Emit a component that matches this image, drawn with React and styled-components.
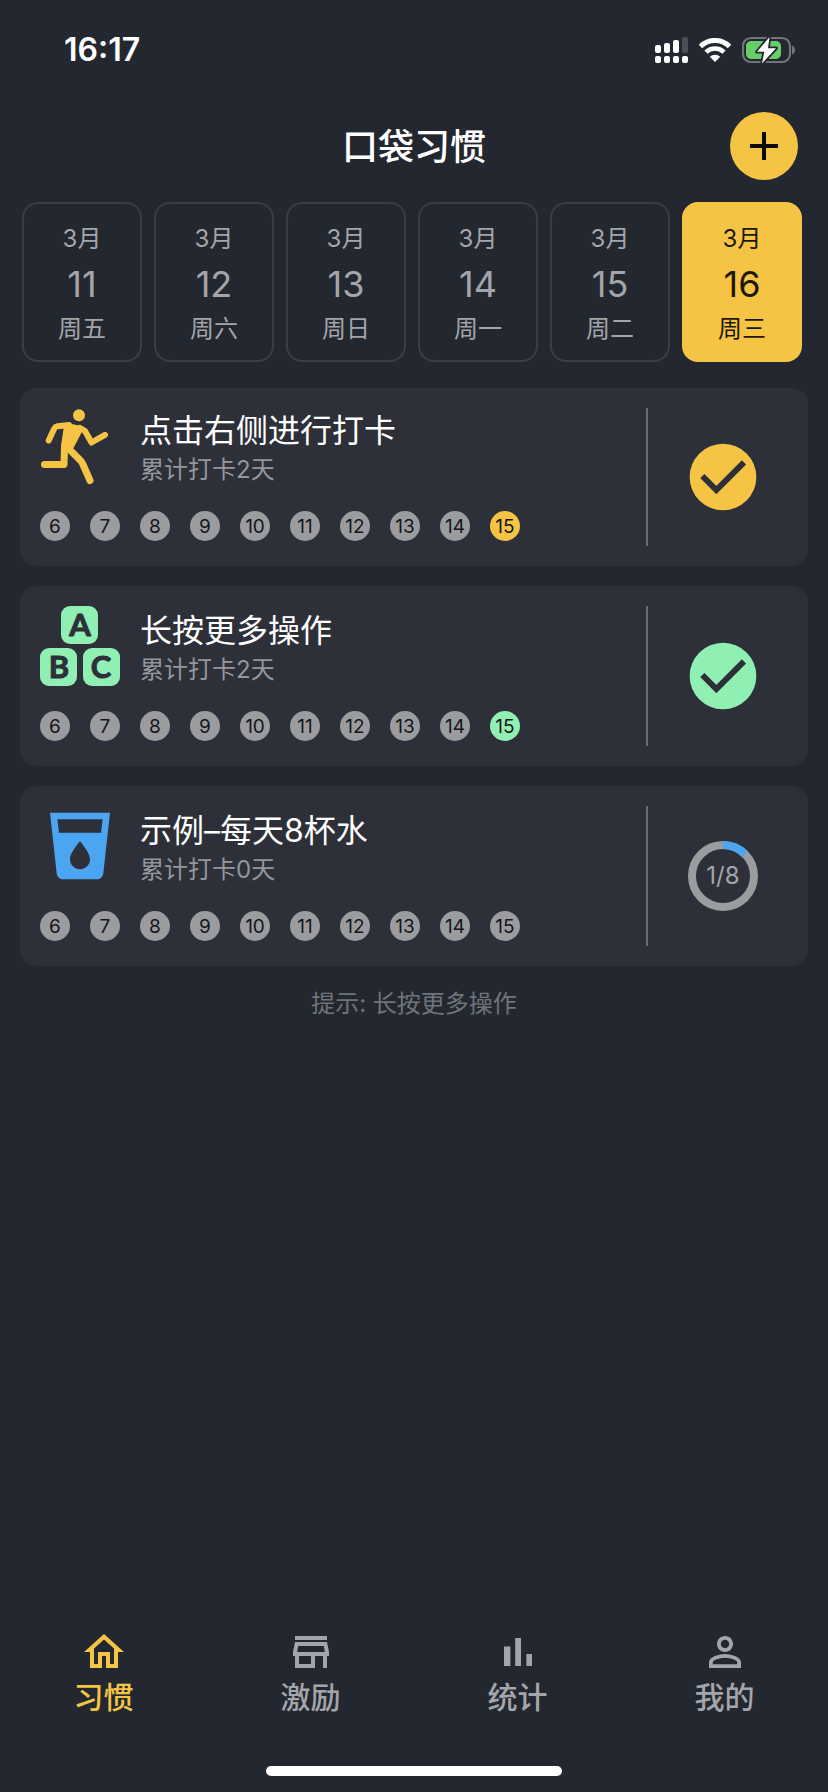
import React from "react";
import styled, { createGlobalStyle, ThemeProvider } from "styled-components";

const theme = {
  bg: "#232830",
  card: "#2d3038",
  line: "#3a3e46",
  divider: "#686b73",
  text: "#ffffff",
  muted: "#a3a5ab",
  sub: "#94969e",
  hint: "#6f737a",
  dot: "#9b9c9f",
  yellow: "#f6c445",
  green: "#90f0b4",
  blue: "#4ba5f0",
};

const GlobalStyle = createGlobalStyle`
  *, *::before, *::after { box-sizing: border-box; }
  body {
    margin: 0;
    background: ${theme.bg};
    font-family: Inter, "Noto Sans CJK SC", sans-serif;
  }
  button {
    margin: 0;
    padding: 0;
    border: 0;
    background: none;
    color: inherit;
    font: inherit;
    cursor: pointer;
  }
  svg { display: block; }
`;

const Page = styled.div`
  display: flex;
  flex-direction: column;
  min-height: 100vh;
  background: ${(p) => p.theme.bg};
  color: ${(p) => p.theme.text};
`;

const StatusBar = styled.div`
  display: flex;
  align-items: center;
  justify-content: space-between;
  height: 100px;
  padding: 0 32px 0 64px;
`;

const Clock = styled.time`
  font-size: 32px;
  font-weight: 600;
  line-height: 40px;
`;

const StatusIcons = styled.div`
  display: flex;
  align-items: center;
  gap: 11px;
`;

const Header = styled.header`
  display: grid;
  grid-template-columns: 1fr auto 1fr;
  align-items: center;
  height: 92px;
  padding: 0 30px;
`;

const Title = styled.h1`
  grid-column: 2;
  margin: 0;
  padding-top: 2px;
  font-size: 36px;
  font-weight: 500;
  line-height: 48px;
`;

const AddButton = styled.button`
  display: grid;
  place-items: center;
  justify-self: end;
  width: 68px;
  height: 68px;
  border-radius: 50%;
  background: ${(p) => p.theme.yellow};
`;

const DateStrip = styled.div`
  display: grid;
  grid-template-columns: repeat(6, 1fr);
  gap: 12px;
  padding: 10px 26px 26px 22px;
`;

const DateCell = styled.button`
  display: flex;
  flex-direction: column;
  align-items: center;
  height: 160px;
  padding-top: 18px;
  border: 2px solid ${(p) => (p.$active ? p.theme.yellow : p.theme.line)};
  border-radius: 16px;
  background: ${(p) => (p.$active ? p.theme.yellow : "transparent")};
  color: ${(p) => (p.$active ? "#1c1708" : p.theme.muted)};
`;

const DateLabel = styled.span`
  font-size: 24px;
  line-height: 34px;
`;

const DateNumber = styled.span`
  font-size: 36px;
  line-height: 56px;
`;

const HabitList = styled.ul`
  display: flex;
  flex-direction: column;
  gap: 20px;
  margin: 0;
  padding: 0 20px;
  list-style: none;
`;

const HabitCard = styled.li`
  display: flex;
  padding: 20px 10px 20px 20px;
  border-radius: 16px;
  background: ${(p) => p.theme.card};
`;

const HabitMain = styled.div`
  flex: 1;
`;

const HabitHead = styled.div`
  display: flex;
  align-items: flex-end;
  gap: 20px;
`;

const HabitIcon = styled.div`
  display: grid;
  place-items: center;
  width: 80px;
`;

const HabitName = styled.h2`
  margin: 0;
  font-size: 32px;
  font-weight: 400;
  line-height: 46px;
`;

const HabitTotal = styled.p`
  margin: 0;
  color: ${(p) => p.theme.sub};
  font-size: 24px;
  line-height: 32px;
`;

const DotRow = styled.ol`
  display: flex;
  gap: 20px;
  margin: 25px 0 5px;
  padding: 0;
  list-style: none;
`;

const Dot = styled.li`
  width: 30px;
  height: 30px;
  border-radius: 50%;
  background: ${(p) => p.$color || p.theme.dot};
  color: #14161a;
  font-size: 19px;
  line-height: 32px;
  text-align: center;
`;

const HabitSide = styled.div`
  display: grid;
  place-items: center;
  width: 152px;
  border-left: 2px solid ${(p) => p.theme.divider};
`;

const CheckButton = styled.button`
  display: grid;
  place-items: center;
`;

const Hint = styled.p`
  flex: 1;
  margin: 20px 0 0;
  color: ${(p) => p.theme.hint};
  font-size: 24px;
  line-height: 36px;
  text-align: center;
`;

const TabBar = styled.nav`
  display: grid;
  grid-template-columns: repeat(4, 1fr);
`;

const Tab = styled.a`
  display: flex;
  flex-direction: column;
  align-items: center;
  color: ${(p) => (p.$active ? p.theme.yellow : p.theme.muted)};
  font-size: 30px;
  font-weight: 500;
  line-height: 42px;
  text-decoration: none;
`;

const HomeIndicator = styled.div`
  align-self: center;
  width: 296px;
  height: 10px;
  margin: 48px 0 16px;
  border-radius: 5px;
  background: #ffffff;
`;

const SignalIcon = () => (
  <svg width="33" height="26" viewBox="0 0 33 26" fill="#fff" aria-hidden="true">
    <rect x="0" y="8" width="6" height="8" rx="2" />
    <rect x="9" y="6" width="6" height="10" rx="2" />
    <rect x="18" y="3" width="6" height="13" rx="2" />
    <rect x="27" y="0" width="6" height="16" rx="2" fill="#4b4f56" />
    <rect x="0" y="19" width="6" height="7" rx="2" />
    <rect x="9" y="19" width="6" height="7" rx="2" />
    <rect x="18" y="19" width="6" height="7" rx="2" />
    <rect x="27" y="19" width="6" height="7" rx="2" />
  </svg>
);

const WifiIcon = () => (
  <svg width="32" height="24" viewBox="0 0 32 24" fill="none" stroke="#fff" aria-hidden="true">
    <path d="M1.5 8.4a20.6 20.6 0 0 1 29 0" strokeWidth="5" />
    <path d="M7 14.2a12.8 12.8 0 0 1 18 0" strokeWidth="4.6" />
    <path d="M16 24l-5.200-5.200a7.400 7.400 0 0 1 10.400 0z" fill="#fff" stroke="none" />
  </svg>
);

const BatteryIcon = () => (
  <svg width="54" height="28" viewBox="0 0 54 28" aria-hidden="true">
    <rect x="1" y="2" width="47" height="24" rx="8" fill="none" stroke="#71757b" strokeWidth="2.200" />
    <path d="M50 9.500c4 1.500 4 7.500 0 9z" fill="#71757b" />
    <rect x="4" y="5" width="35" height="18" rx="5" fill="#67ce67" />
    <path
      d="M27.500 1L15 15.800h7.300L20 27.500 34 12.200h-8z"
      fill="#fff"
      stroke={theme.bg}
      strokeWidth="3.600"
      strokeLinejoin="round"
      paintOrder="stroke"
    />
  </svg>
);

const PlusIcon = () => (
  <svg width="28" height="28" viewBox="0 0 28 28" stroke="#0c0a04" strokeWidth="4" aria-hidden="true">
    <path d="M14 0v28M0 14h28" />
  </svg>
);

const RunnerIcon = () => (
  <svg
    width="78"
    height="78"
    viewBox="11 8 78 78"
    fill="none"
    stroke={theme.yellow}
    strokeWidth="6"
    strokeLinecap="round"
    strokeLinejoin="round"
    aria-hidden="true"
  >
    <circle cx="49" cy="15.300" r="6" fill={theme.yellow} stroke="none" />
    <path d="M18.700 40.500L24 29q1-2.200 3.500-2.800L39 25" />
    <path d="M37 26l13 3-10.500 20-5.500-3z" fill={theme.yellow} />
    <path d="M50 28l5 3 6.500 11.500L75 34.800" />
    <path d="M34.500 47l-.5 17.500H14.500" strokeWidth="7" />
    <path d="M38 48l12 12q2 2 3 4.500L60 80.500" strokeWidth="7" />
  </svg>
);

const BlockLetter = styled.text`
  fill: ${(p) => p.theme.card};
  stroke: ${(p) => p.theme.card};
  stroke-width: 1px;
  stroke-linejoin: round;
  font-family: Lato, sans-serif;
  font-size: 31px;
  font-weight: 700;
  text-anchor: middle;
`;

const BlocksIcon = () => (
  <svg width="80" height="80" viewBox="0 0 80 80" fill={theme.green} aria-hidden="true">
    <rect x="21" y="0" width="37" height="38" rx="9" />
    <rect x="0" y="42" width="37" height="38" rx="9" />
    <rect x="43" y="42" width="37" height="38" rx="9" />
    <BlockLetter x="40" y="30">A</BlockLetter>
    <BlockLetter x="19" y="72">B</BlockLetter>
    <BlockLetter x="61" y="72">C</BlockLetter>
  </svg>
);

const GlassIcon = () => (
  <svg width="80" height="80" viewBox="0 0 24 24" fill={theme.blue} aria-hidden="true">
    <path d="M3 2l2.010 18.230C5.130 21.230 5.970 22 7 22h10c1.030 0 1.870-.77 1.990-1.770L21 2H3zm9 17c-1.660 0-3-1.340-3-3 0-2 3-5.400 3-5.400s3 3.400 3 5.400c0 1.660-1.340 3-3 3zm6.330-11H5.670l-.44-4h13.550l-.45 4z" />
  </svg>
);

const CheckIcon = ({ color }) => (
  <svg width="80" height="80" viewBox="0 0 24 24" aria-hidden="true">
    <circle cx="12" cy="12" r="10" fill={color} />
    <path d="M5.800 11.700l4.200 4.200 8.300-8.300" fill="none" stroke={theme.card} strokeWidth="1.800" />
  </svg>
);

const RingLabel = styled.text`
  fill: ${(p) => p.theme.muted};
  font-size: 24px;
  text-anchor: middle;
`;

const ProgressRing = ({ done, goal, color }) => {
  const radius = 31;
  const length = 2 * Math.PI * radius;
  return (
    <svg width="70" height="70" viewBox="0 0 70 70" fill="none" strokeWidth="8">
      <circle cx="35" cy="35" r={radius} stroke={theme.dot} />
      <circle
        cx="35"
        cy="35"
        r={radius}
        stroke={color}
        strokeDasharray={`${(length * done) / goal} ${length}`}
        transform="rotate(-90 35 35)"
      />
      <RingLabel x="35" y="43" strokeWidth="0">{`${done}/${goal}`}</RingLabel>
    </svg>
  );
};

const TAB_PATHS = {
  home: "M12 5.690l5 4.500V18h-2v-6H9v6H7v-7.810l5-4.500M12 3L2 12h3v8h6v-6h2v6h6v-8h3L12 3z",
  store:
    "M18.360 9l.6 3H5.040l.6-3h12.720M20 4H4v2h16V4zm0 3H4l-1 5v2h1v6h10v-6h4v6h2v-6h1v-2l-1-5zM6 18v-4h6v4H6z",
  chart: "M5 9.200h3.200V19H5V9.200zM10.600 5h2.900v14h-2.900V5zm5.600 8H19v6h-2.800v-6z",
  person:
    "M12 5.900c1.160 0 2.100.94 2.100 2.100s-.94 2.100-2.100 2.100S9.900 9.160 9.900 8s.94-2.100 2.100-2.100m0 9c2.970 0 6.100 1.460 6.100 2.100v1.100H5.900V17c0-.64 3.130-2.100 6.100-2.100M12 4C9.790 4 8 5.790 8 8s1.790 4 4 4 4-1.790 4-4-1.790-4-4-4zm0 9c-2.670 0-8 1.340-8 4v3h16v-3c0-2.660-5.330-4-8-4z",
};

const TabIcon = ({ name }) => (
  <svg width="48" height="48" viewBox="0 0 24 24" fill="currentColor" aria-hidden="true">
    <path d={TAB_PATHS[name]} />
  </svg>
);

const dates = [
  ["11", "周五"],
  ["12", "周六"],
  ["13", "周日"],
  ["14", "周一"],
  ["15", "周二"],
  ["16", "周三"],
];

const recentDays = [6, 7, 8, 9, 10, 11, 12, 13, 14, 15];

const habits = [
  {
    name: "点击右侧进行打卡",
    total: 2,
    checked: [15],
    color: theme.yellow,
    icon: <RunnerIcon />,
  },
  {
    name: "长按更多操作",
    total: 2,
    checked: [15],
    color: theme.green,
    icon: <BlocksIcon />,
  },
  {
    name: "示例–每天8杯水",
    total: 0,
    checked: [],
    color: theme.blue,
    icon: <GlassIcon />,
    progress: { done: 1, goal: 8 },
  },
];

const tabs = [
  ["home", "习惯"],
  ["store", "激励"],
  ["chart", "统计"],
  ["person", "我的"],
];

const Habit = ({ name, total, checked, color, icon, progress }) => (
  <HabitCard>
    <HabitMain>
      <HabitHead>
        <HabitIcon>{icon}</HabitIcon>
        <div>
          <HabitName>{name}</HabitName>
          <HabitTotal>{`累计打卡${total}天`}</HabitTotal>
        </div>
      </HabitHead>
      <DotRow>
        {recentDays.map((day) => (
          <Dot key={day} $color={checked.includes(day) ? color : undefined}>
            {day}
          </Dot>
        ))}
      </DotRow>
    </HabitMain>
    <HabitSide>
      <CheckButton type="button" aria-label={name}>
        {progress ? <ProgressRing {...progress} color={color} /> : <CheckIcon color={color} />}
      </CheckButton>
    </HabitSide>
  </HabitCard>
);

export default function App() {
  return (
    <ThemeProvider theme={theme}>
      <GlobalStyle />
      <Page lang="zh-CN">
        <StatusBar>
          <Clock>16:17</Clock>
          <StatusIcons>
            <SignalIcon />
            <WifiIcon />
            <BatteryIcon />
          </StatusIcons>
        </StatusBar>
        <Header>
          <Title>口袋习惯</Title>
          <AddButton type="button" aria-label="添加">
            <PlusIcon />
          </AddButton>
        </Header>
        <DateStrip>
          {dates.map(([day, weekday]) => (
            <DateCell key={day} type="button" $active={day === "16"}>
              <DateLabel>3月</DateLabel>
              <DateNumber>{day}</DateNumber>
              <DateLabel>{weekday}</DateLabel>
            </DateCell>
          ))}
        </DateStrip>
        <HabitList>
          {habits.map((habit) => (
            <Habit key={habit.name} {...habit} />
          ))}
        </HabitList>
        <Hint>提示: 长按更多操作</Hint>
        <TabBar>
          {tabs.map(([icon, label]) => (
            <Tab key={icon} href={`#${icon}`} $active={icon === "home"}>
              <TabIcon name={icon} />
              {label}
            </Tab>
          ))}
        </TabBar>
        <HomeIndicator />
      </Page>
    </ThemeProvider>
  );
}
